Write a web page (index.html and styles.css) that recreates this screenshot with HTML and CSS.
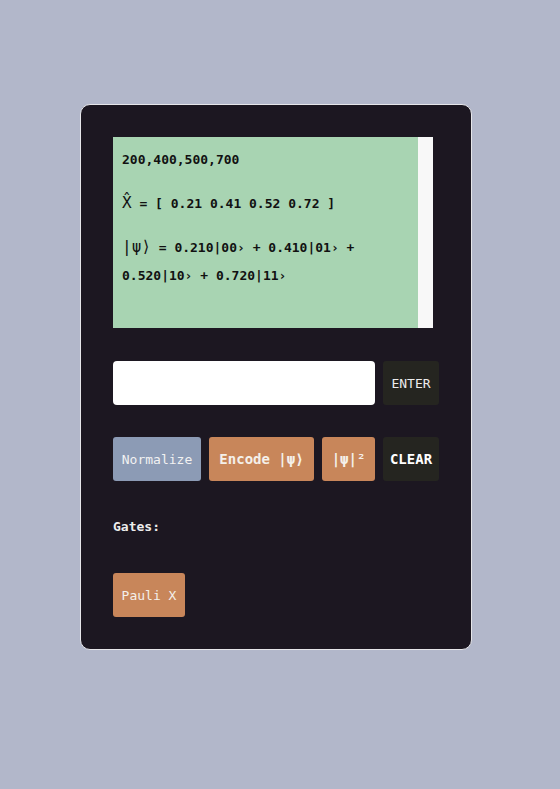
FILE: index.html
```html
<!DOCTYPE html>
<html>
<head>
<meta charset="utf-8">
<link rel="stylesheet" href="styles.css">
</head>
<body>
<div class="page">
  <div class="card">
    <div class="display">
      <div class="screen">
        <p class="line">200,400,500,700</p>
        <p class="line"><span class="big">X̂</span> = [ 0.21 0.41 0.52 0.72 ]</p>
        <p class="line"><span class="big">|ψ⟩</span> = 0.210|00› + 0.410|01› + 0.520|10› + 0.720|11›</p>
      </div>
      <div class="track"></div>
    </div>
    <div class="row first">
      <input class="field" type="text">
      <button class="btn dark">ENTER</button>
    </div>
    <div class="row">
      <button class="btn slate">Normalize</button>
      <button class="btn copper bold">Encode |ψ⟩</button>
      <button class="btn copper bold sq">|ψ|²</button>
      <button class="btn dark bold clear">CLEAR</button>
    </div>
    <div class="label">Gates:</div>
    <div class="row gates">
      <button class="btn copper pauli">Pauli X</button>
    </div>
  </div>
</div>
</body>
</html>
```
FILE: styles.css
```css
html, body {
  margin: 0;
  padding: 0;
  background: #b2b7ca;
  font-family: "DejaVu Sans Mono", "Liberation Mono", monospace;
}
.page {
  padding: 104px 0 0 80px;
}
.card {
  box-sizing: border-box;
  width: 392px;
  height: 546px;
  background: #1c1721;
  border: 1px solid #e6e6ea;
  border-radius: 10px;
  padding: 32px;
}
.display {
  display: flex;
  width: 320px;
  height: 191px;
}
.screen {
  flex: 1;
  background: #a8d4b2;
  padding: 9px 8px 0 9px;
  color: #111;
  font-size: 13px;
  font-weight: bold;
}
.track {
  width: 15px;
  background: #f8f8f8;
}
.line {
  margin: 0 0 16px 0;
  line-height: 28px;
}
.big {
  font-size: 16px;
  font-weight: normal;
  line-height: 0;
}
.row {
  display: flex;
  gap: 8px;
  margin-top: 32px;
  width: 326px;
}
.row.first {
  margin-top: 33px;
}
.field {
  box-sizing: border-box;
  width: 262px;
  height: 44px;
  border: none;
  border-radius: 4px;
  background: #ffffff;
  margin: 0;
}
.btn {
  height: 44px;
  border: none;
  border-radius: 3px;
  margin: 0;
  padding: 0 6px;
  font-family: "DejaVu Sans Mono", "Liberation Mono", monospace;
  font-size: 13px;
  color: #ececec;
}
.bold {
  font-weight: bold;
}
.dark {
  background: #252520;
  width: 56px;
}
.slate {
  background: #8c9bb5;
  width: 88px;
  color: #f2f2f2;
}
.copper {
  background: #c8865a;
  color: #f4f0ea;
}
.copper.bold {
  width: 105px;
  font-size: 14px;
}
.copper.sq {
  width: 53px;
}
.clear {
  color: #ffffff;
  font-size: 14px;
}
.label {
  margin-top: 36px;
  color: #ececec;
  font-size: 13px;
  font-weight: bold;
  line-height: 20px;
}
.gates {
  margin-top: 36px;
}
.pauli {
  width: 72px;
}
```
